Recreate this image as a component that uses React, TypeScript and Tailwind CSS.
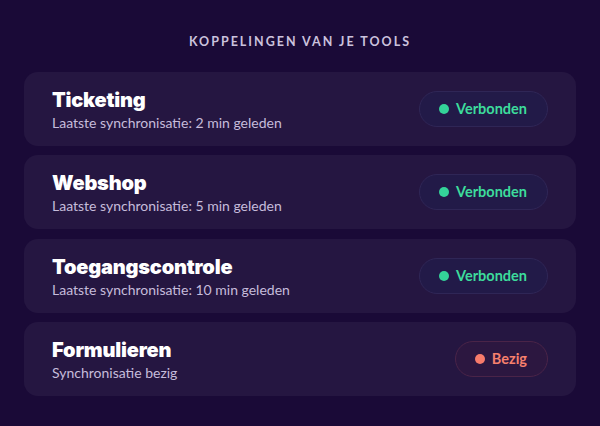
import { Fragment } from 'react'

type Status = 'connected' | 'syncing'

interface Integration {
  name: string
  detail: string
  status: Status
}

const integrations: Integration[] = [
  { name: 'Ticketing', detail: 'Laatste synchronisatie: 2 min geleden', status: 'connected' },
  { name: 'Webshop', detail: 'Laatste synchronisatie: 5 min geleden', status: 'connected' },
  { name: 'Toegangscontrole', detail: 'Laatste synchronisatie: 10 min geleden', status: 'connected' },
  { name: 'Formulieren', detail: 'Synchronisatie bezig', status: 'syncing' },
]

function StatusBadge({ status }: { status: Status }) {
  if (status === 'connected') {
    return (
      <div className="flex h-9 items-center gap-[7px] rounded-full border border-[#2f2656] bg-[#221a48] pr-5 pl-[19px]">
        <span className="h-[10px] w-[10px] rounded-full bg-[#34d399]" />
        <span className="text-[14.5px] font-bold text-[#3ddc9c]">Verbonden</span>
      </div>
    )
  }
  return (
    <div className="flex h-9 items-center gap-[7px] rounded-full border border-[#4a2448] bg-[#2c1740] pr-5 pl-[19px]">
      <span className="h-[10px] w-[10px] rounded-full bg-[#f77b6b]" />
      <span className="text-[14.5px] font-bold text-[#f7806d]">Bezig</span>
    </div>
  )
}

export default function App() {
  return (
    <div
      className="min-h-screen bg-[#1a0a37] px-6 pt-[33px] pb-8"
      style={{ fontFamily: 'Lato, "Noto Sans", sans-serif' }}
    >
      <h2 className="text-center text-[12.5px] font-bold uppercase tracking-[0.16em] text-[#cbc2dd]">
        Koppelingen van je tools
      </h2>
      <div className="mt-[20px] flex flex-col gap-[9.5px]">
        {integrations.map((item) => (
          <Fragment key={item.name}>
            <div className="flex h-[74px] items-center justify-between rounded-[14px] bg-[#251641] pl-7 pr-7">
              <div className="mt-[3px] flex flex-col">
                <span
                  className="text-[20px] leading-6 font-black tracking-[-0.01em] text-white"
                  style={{ fontFamily: 'Inter, sans-serif' }}
                >
                  {item.name}
                </span>
                <span className="mt-[1px] text-[14px] leading-5 text-[#c6bcdb]">{item.detail}</span>
              </div>
              <StatusBadge status={item.status} />
            </div>
          </Fragment>
        ))}
      </div>
    </div>
  )
}
